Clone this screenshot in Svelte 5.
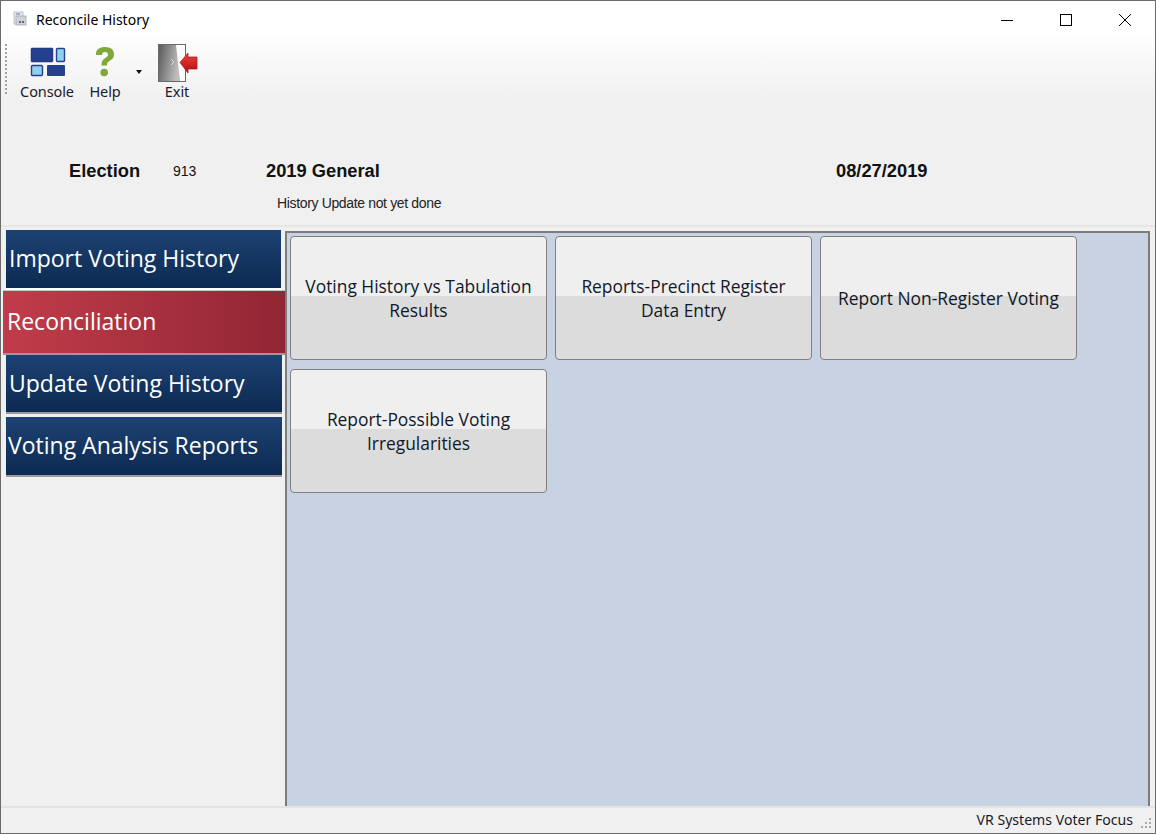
<script>
  const tabs = [
    { label: 'Import Voting History', kind: 'imp' },
    { label: 'Reconciliation', kind: 'active' },
    { label: 'Update Voting History', kind: 'upd' },
    { label: 'Voting Analysis Reports', kind: 'ana' }
  ];
  const buttons = [
    ['Voting History vs Tabulation', 'Results'],
    ['Reports-Precinct Register', 'Data Entry'],
    ['Report Non-Register Voting'],
    ['Report-Possible Voting', 'Irregularities']
  ];
</script>

<div class="window">
  <header class="titlebar">
    <svg class="appicon" width="16" height="16" viewBox="0 0 16 16">
      <rect x="2" y="1" width="9" height="12" fill="#e4e6ee" stroke="#b4b8c6" stroke-width="0.8"/>
      <rect x="4" y="5" width="10" height="9" fill="#cfd3dd" stroke="#a5a9b6" stroke-width="0.8"/>
      <rect x="7" y="10" width="2" height="2" fill="#666"/>
      <rect x="10" y="10" width="2" height="2" fill="#666"/>
      <rect x="4" y="2" width="4" height="2" fill="#9db4d0"/>
    </svg>
    <span class="title">Reconcile History</span>
    <div class="winctl">
      <svg width="12" height="12" viewBox="0 0 12 12"><path d="M0 6.5H12" stroke="#000" stroke-width="1"/></svg>
      <svg width="12" height="12" viewBox="0 0 12 12"><rect x="0.5" y="0.5" width="11" height="11" fill="none" stroke="#000"/></svg>
      <svg width="12" height="12" viewBox="0 0 12 12"><path d="M0 0L12 12M12 0L0 12" stroke="#000" stroke-width="1"/></svg>
    </div>
  </header>

  <nav class="toolbar">
    <div class="grip"></div>
    <div class="tool console">
      <svg width="36" height="30" viewBox="0 0 36 30">
        <rect x="1" y="1" width="22" height="14" rx="1" fill="#25408f" stroke="#1b2f70" stroke-width="0.5"/>
        <rect x="26.5" y="1.5" width="8" height="13" rx="1" fill="#8fd0ee" stroke="#25408f" stroke-width="1.4"/>
        <rect x="1.5" y="18.5" width="11" height="10" rx="1" fill="#8fd0ee" stroke="#25408f" stroke-width="1.4"/>
        <rect x="17" y="18" width="18" height="11" rx="1" fill="#25408f"/>
      </svg>
      <span>Console</span>
    </div>
    <div class="tool help">
      <svg width="24" height="34" viewBox="0 0 24 34">
        <path d="M3 9C3 4 7 2 12 2C18 2 21 5 21 9.500C21 13 19 14.500 16.500 16C14.500 17.200 14 18 14 20.500H8.500C8.500 16.500 9.500 15 12 13.200C14 11.800 15 11 15 9.500C15 8 13.800 7 12 7C10 7 9 8.200 9 10H3Z" fill="#7fa83c"/>
        <circle cx="11.200" cy="27.500" r="3.800" fill="#7fa83c"/>
      </svg>
      <span>Help</span>
    </div>
    <div class="caret"></div>
    <div class="tool exit">
      <svg width="40" height="38" viewBox="0 0 40 38">
        <defs>
          <linearGradient id="door" x1="0" x2="1" y1="0" y2="0.300">
            <stop offset="0" stop-color="#5a5a5a"/>
            <stop offset="1" stop-color="#bdbdbd"/>
          </linearGradient>
          <linearGradient id="arrow" x1="0" x2="0" y1="0" y2="1">
            <stop offset="0" stop-color="#f2403c"/>
            <stop offset="1" stop-color="#b00d12"/>
          </linearGradient>
        </defs>
        <rect x="0.500" y="0.500" width="27" height="37" fill="#fbfbfb" stroke="#6a6a6a"/>
        <path d="M1 1H18L22 37H1Z" fill="url(#door)"/>
        <path d="M13 15L16 18L13 21" fill="none" stroke="#ddd" stroke-width="1"/>
        <path d="M22 18.500L30 9V13H39V25H30V29Z" fill="url(#arrow)" stroke="#a01015" stroke-width="0.700"/>
      </svg>
      <span>Exit</span>
    </div>
  </nav>

  <section class="info">
    <div class="info-row">
      <b>Election</b>
      <span class="num">913</span>
      <b>2019 General</b>
      <b>08/27/2019</b>
    </div>
    <div class="status-msg">History Update not yet done</div>
  </section>

  <main class="body">
    <aside class="tabs">
      {#each tabs as t}
        <div class="tab {t.kind}">{t.label}</div>
      {/each}
    </aside>
    <div class="panel">
      {#each buttons as lines}
        <button class="action">
          {#each lines as l}<span>{l}</span>{/each}
        </button>
      {/each}
    </div>
  </main>

  <footer class="statusbar">
    <span>VR Systems Voter Focus</span>
    <svg class="resize" width="14" height="14" viewBox="0 0 14 14" fill="#a9a9a9">
      <rect x="10" y="2" width="2" height="2"/><rect x="6" y="6" width="2" height="2"/><rect x="10" y="6" width="2" height="2"/>
      <rect x="2" y="10" width="2" height="2"/><rect x="6" y="10" width="2" height="2"/><rect x="10" y="10" width="2" height="2"/>
    </svg>
  </footer>
</div>

<style>
  :global(body) { margin: 0; background: #f0f0f0; }
  .window {
    box-sizing: border-box;
    width: 1156px;
    height: 834px;
    border: 1px solid #6b6b6b;
    display: flex;
    flex-direction: column;
    background: #f0f0f0;
    font-family: "Open Sans", "Noto Sans", sans-serif;
    overflow: hidden;
  }
  .titlebar {
    flex: 0 0 37px;
    background: #fff;
    display: flex;
    align-items: center;
    padding-left: 11px;
    font-family: "Noto Sans", "Open Sans", sans-serif;
  }
  .appicon { margin-right: 8px; margin-top: -2px; }
  .title { font-size: 14px; color: #000; margin-top: -1px; }
  .winctl {
    margin-left: auto;
    display: flex;
    gap: 47px;
    padding-right: 24px;
    align-items: center;
    margin-top: 1px;
  }
  .toolbar {
    flex: 0 0 62px;
    box-sizing: border-box;
    background: linear-gradient(#fdfdfd, #f0f0f0);
    display: flex;
    align-items: flex-start;
    padding: 2px 0 0 4px;
    font-family: "Noto Sans", "Open Sans", sans-serif;
    font-size: 14.500px;
    color: #1a1a2a;
  }
  .grip {
    width: 2px;
    height: 52px;
    margin-top: 4px;
    background: repeating-linear-gradient(#a0a0a0 0 2px, transparent 2px 4px);
  }
  .tool {
    display: flex;
    flex-direction: column;
    align-items: center;
    height: 60px;
    justify-content: flex-end;
  }
  .tool span { line-height: 18px; height: 18px; letter-spacing: -0.1px; }
  .console { margin-left: 12px; width: 56px; }
  .console svg { margin-bottom: 5px; margin-left: 2px; }
  .help { margin-left: 10px; width: 40px; }
  .help svg { margin-bottom: 3px; }
  .caret {
    width: 0; height: 0;
    margin: 30px 0 0 11px;
    border: 3.5px solid transparent;
    border-top: 4px solid #111;
    border-bottom: 0;
  }
  .exit { margin-left: 13px; width: 44px; }
  .exit svg { margin-bottom: 0; margin-left: 2px; }
  .info {
    flex: 0 0 127px;
    box-sizing: border-box;
    border-bottom: 2px solid #e6e6e6;
    padding-top: 60px;
    font-family: "Liberation Sans", Arial, sans-serif;
    color: #111;
  }
  .info-row {
    display: grid;
    grid-template-columns: 104px 93px 570px auto;
    padding-left: 68px;
    align-items: center;
    height: 20px;
    font-size: 18.300px;
  }
  .num { font-size: 14px; }
  .status-msg { font-size: 14px; margin: 15px 0 0 276px; letter-spacing: -0.35px; color: #222; line-height: 16px; }
  .body { flex: 1 1 0; display: flex; min-height: 0; }
  .tabs {
    width: 284px;
    flex: none;
    box-sizing: border-box;
    padding: 3px 0 0 0;
    display: flex;
    flex-direction: column;
    color: #fff;
    font-size: 23px;
  }
  .tab {
    box-sizing: border-box;
    margin-left: 5px;
    width: 275px;
    display: flex;
    align-items: center;
    padding-left: 3px;
    padding-bottom: 2px;
    white-space: nowrap;
    background: linear-gradient(#1d4272, #0c2a52);
    border-bottom: 2px solid #9a9a9a;
  }
  .imp { height: 60px; border-bottom-color: #fff; }
  .active {
    height: 65px;
    margin-left: 2px;
    width: 282px;
    padding-left: 4px;
    background: linear-gradient(90deg, #c13c4a, #922634);
    border-top: 1px solid #c9c9c9;
  }
  .upd { height: 59px; width: 276px; }
  .ana { height: 60px; margin-top: 3px; width: 276px; padding-left: 2px; }
  .panel {
    flex: 1 1 0;
    margin-right: 5px;
    box-sizing: border-box;
    margin-top: 4px;
    background: #c9d2e3;
    border: 2px solid #7c7c7c;
    border-bottom: 0;
    padding: 3px 0 0 3px;
    display: grid;
    grid-template-columns: repeat(3, 257px);
    grid-auto-rows: 124px;
    column-gap: 8px;
    row-gap: 9px;
    align-content: start;
    overflow: hidden;
  }
  .action {
    box-sizing: border-box;
    border: 1px solid #808080;
    border-radius: 4px;
    background: linear-gradient(#efefef 0 48.500%, #dcdcdc 48.500% 100%);
    display: flex;
    flex-direction: column;
    align-items: center;
    justify-content: center;
    padding: 0;
    font-family: "Open Sans", "Noto Sans", sans-serif;
    font-size: 17.400px;
    line-height: 24px;
    color: #111827;
  }
  .statusbar {
    flex: 0 0 27px;
    box-sizing: border-box;
    border-top: 2px solid #e3e3e3;
    display: flex;
    align-items: center;
    justify-content: flex-end;
    font-family: "Noto Sans", "Open Sans", sans-serif;
    font-size: 14.100px;
    color: #1a1a2a;
    padding: 0 2px 3px 0;
  }
  .resize { margin-left: 6px; margin-top: 8px; }
</style>
